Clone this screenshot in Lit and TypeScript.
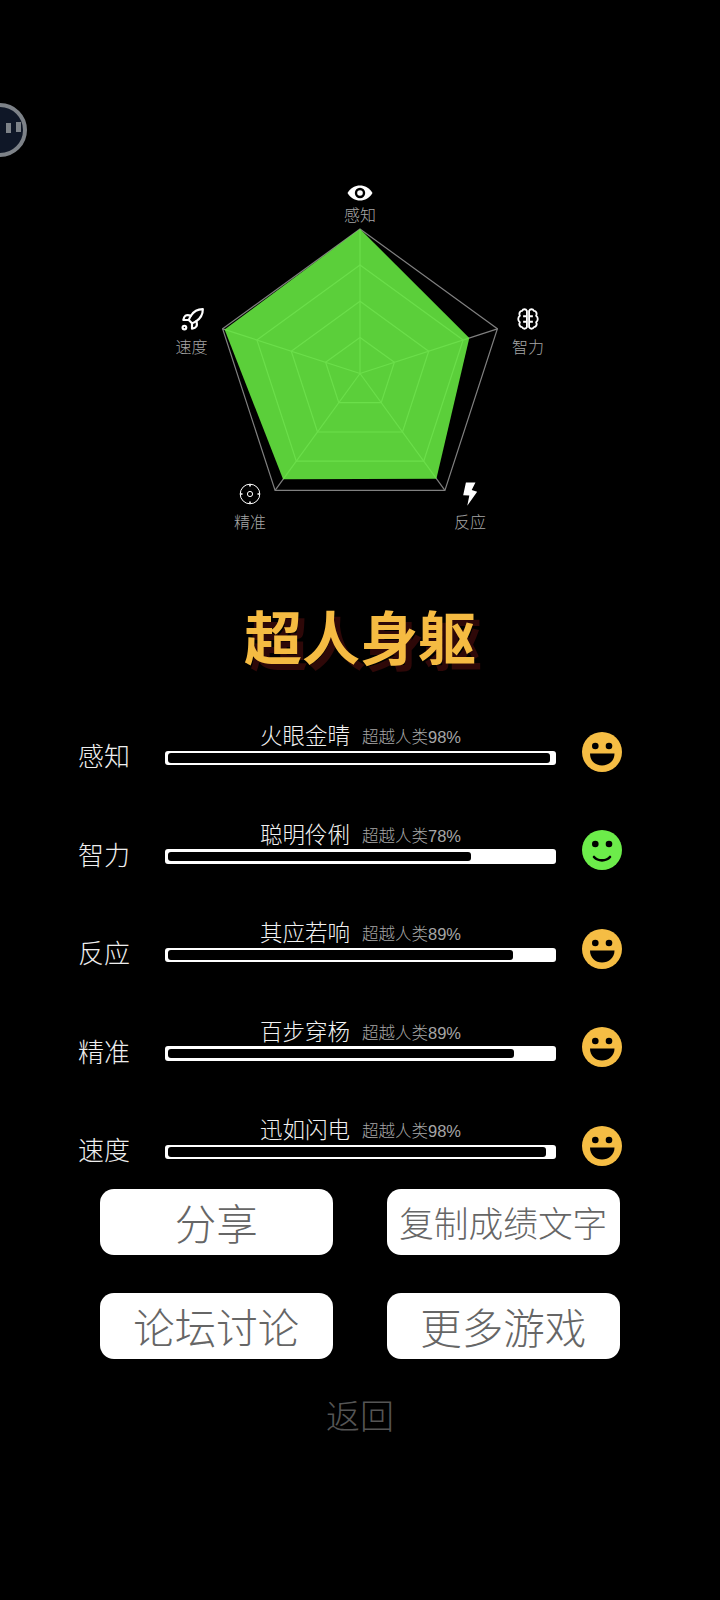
import { LitElement, html, svg, css } from 'lit'
import { customElement } from 'lit/decorators.js'

const CX = 360
const CY = 373.5
const R = 144.5

// clockwise from the top
const point = (i: number, v: number) => {
  const a = -Math.PI / 2 + (i * 2 * Math.PI) / 5
  return [CX + R * v * Math.cos(a), CY + R * v * Math.sin(a)]
}
const ring = (values: number[]) =>
  values.map((v, i) => point(i, v).map((n) => n.toFixed(1)).join(',')).join(' ')

const eye = svg`<svg width="26" height="18" viewBox="0 0 26 18"><path fill="#fff" d="M0.5 9C4 3.5 8 1.5 13 1.5S22 3.5 25.5 9C22 14.500 18 16.500 13 16.500S4 14.500 0.5 9Z"/><circle cx="13" cy="9" r="5.200" fill="#000"/><circle cx="13" cy="9" r="2.800" fill="#fff"/></svg>`

const rocket = svg`<svg width="26" height="26" viewBox="0 0 24 24" fill="none" stroke="#fff" stroke-width="2" stroke-linecap="round" stroke-linejoin="round"><circle cx="5" cy="19" r="1.700"/><path d="m12 15-3-3a22 22 0 0 1 2-3.950A12.880 12.880 0 0 1 22 2c0 2.720-.78 7.500-6 11a22.350 22.350 0 0 1-4 2z"/><path d="M9 12H4s.55-3.030 2-4c1.620-1.080 5 0 5 0"/><path d="M12 15v5s3.030-.55 4-2c1.080-1.620 0-5 0-5"/></svg>`

const lobe = 'M11 4.500C10 2.500 7.500 2.500 6.500 4.500C4.500 4.500 3.300 7 4.500 9C2.500 10.500 2.500 13.500 4.500 15C3.300 17 4.500 19.500 6.500 19.500C7.500 21.500 10 21.500 11 19.500ZM11 9.500H7.500M11 14.500H7.500'
const brain = svg`<svg width="26" height="26" viewBox="0 0 24 24" fill="none" stroke="#fff" stroke-width="1.700" stroke-linejoin="round"><path d=${lobe}/><path d=${lobe} transform="translate(24 0) scale(-1 1)"/></svg>`

const target = svg`<svg width="22" height="22" viewBox="0 0 22 22" fill="none" stroke="#fff" stroke-width="1"><circle cx="11" cy="11" r="9.800"/><circle cx="11" cy="11" r="2.600"/><path stroke-width="1.600" d="M11 1.200V3.500M11 18.500V20.800M1.200 11H3.500M18.500 11H20.800"/></svg>`

const bolt = svg`<svg width="15" height="25" viewBox="908 936 44 71"><path fill="#fff" d="M918 938H946L935 960L951 965L922 1006L928 976L910 975Z"/></svg>`

const grin = svg`<svg width="40" height="40" viewBox="0 0 40 40"><circle cx="20" cy="20" r="20" fill="#f5bd44"/><circle cx="13.300" cy="14" r="3.300" fill="#000"/><circle cx="27" cy="14" r="3.300" fill="#000"/><path fill="#000" d="M8 21.500H32.500C32.500 29 26.500 33.500 20 33.500S8 29 8 21.500Z"/></svg>`

const smile = svg`<svg width="40" height="40" viewBox="0 0 40 40"><circle cx="20" cy="20" r="20" fill="#6cec4a"/><circle cx="13.300" cy="14" r="3.300" fill="#000"/><circle cx="27" cy="14" r="3.300" fill="#000"/><path fill="none" stroke="#000" stroke-width="2.600" stroke-linecap="round" d="M12 27C16 31.500 24 31.500 28 27"/></svg>`

const axes = [
  { label: '感知', icon: eye, ix: 359.5, iy: 193, lx: 360, ly: 214 },
  { label: '智力', icon: brain, ix: 527.5, iy: 319, lx: 528, ly: 345.500 },
  { label: '反应', icon: bolt, ix: 470, iy: 494, lx: 470, ly: 521 },
  { label: '精准', icon: target, ix: 250, iy: 493.500, lx: 250, ly: 521 },
  { label: '速度', icon: rocket, ix: 191.500, iy: 320, lx: 191.500, ly: 345.500 },
]

const scores = [
  { label: '感知', name: '火眼金晴', pct: 98, fill: 99, face: grin },
  { label: '智力', name: '聪明伶俐', pct: 78, fill: 78.500, face: smile },
  { label: '反应', name: '其应若响', pct: 89, fill: 89.500, face: grin },
  { label: '精准', name: '百步穿杨', pct: 89, fill: 89.800, face: grin },
  { label: '速度', name: '迅如闪电', pct: 98, fill: 98.100, face: grin },
]

const shape = [1, 0.795, 0.9, 0.905, 0.985]

@customElement('app-root')
export class AppRoot extends LitElement {
  static styles = css`
    :host {
      display: block;
      position: relative;
      width: 720px;
      height: 1600px;
      overflow: hidden;
      background: #000;
      font-family: "Noto Sans CJK SC", "Liberation Sans", sans-serif;
      font-weight: 300;
    }

    .ball {
      position: absolute;
      left: -27px;
      top: 103px;
      width: 54px;
      height: 54px;
      box-sizing: border-box;
      border-radius: 50%;
      background: #0f1727;
      border: 4px solid #7d8288;
    }
    .ball i {
      position: absolute;
      width: 5px;
      height: 10px;
      background: #7d8288;
    }
    .ball i:nth-child(1) { left: 29px; top: 16px; }
    .ball i:nth-child(2) { left: 39px; top: 15px; }

    .radar {
      position: relative;
      height: 595px;
    }
    .radar svg.chart {
      position: absolute;
      inset: 0;
    }
    .node {
      position: absolute;
      display: flex;
      transform: translate(-50%, -50%);
    }
    .node.text {
      font-size: 16px;
      line-height: 20px;
      color: #a6a6a6;
      white-space: nowrap;
    }

    h1 {
      margin: 0;
      height: 80px;
      line-height: 80px;
      text-align: center;
      font-size: 58px;
      font-weight: 700;
      color: #f5bb42;
      text-shadow: 6px 6px 0 #2e0808;
    }

    .rows {
      display: flex;
      flex-direction: column;
      gap: 53.5px;
      margin-top: 45px;
      padding-left: 78px;
    }
    .row {
      display: flex;
      align-items: flex-start;
      height: 45px;
    }
    .row-label {
      width: 87px;
      margin-top: 17px;
      font-size: 26px;
      line-height: 36px;
      color: #eee;
    }
    .mid {
      width: 391px;
    }
    .head {
      display: flex;
      justify-content: center;
      align-items: center;
      gap: 12px;
      height: 30px;
      white-space: nowrap;
    }
    .name {
      position: relative;
      top: -1px;
      font-size: 22.500px;
      color: #f2f2f2;
    }
    .sub {
      position: relative;
      top: 1px;
      font-family: "Liberation Sans", "Noto Sans CJK SC", sans-serif;
      font-size: 16.500px;
      color: #a6a6a6;
    }
    .track {
      box-sizing: border-box;
      height: 14.500px;
      margin-top: 0.5px;
      padding: 2.500px;
      background: #fff;
      border-radius: 3px;
    }
    .fill {
      height: 100%;
      background: #000;
      border-radius: 3px;
    }
    .face {
      display: flex;
      margin: 11.500px 0 0 26px;
    }

    .buttons {
      display: grid;
      grid-template-columns: 232.500px 232.500px;
      gap: 38px 54.500px;
      margin-top: 30px;
      padding-left: 100px;
    }
    .btn {
      height: 66px;
      display: flex;
      align-items: center;
      justify-content: center;
      background: #fff;
      border-radius: 14px;
      font-size: 41.500px;
      color: #666;
      white-space: nowrap;
    }
    .btn.small {
      font-size: 34.700px;
    }
    .back {
      margin-top: 34px;
      height: 44px;
      line-height: 44px;
      text-align: center;
      font-size: 34px;
      color: #555;
    }
  `

  render() {
    const levels = [1, 0.75, 0.5, 0.25]
    return html`
      <div class="ball"><i></i><i></i></div>

      <div class="radar">
        <svg class="chart" width="720" height="595" viewBox="0 0 720 595">
          ${levels.map((l) => svg`<polygon points=${ring([l, l, l, l, l])} fill="none" stroke="#808080" stroke-width="1.200"/>`)}
          ${axes.map((_, i) => {
            const [x, y] = point(i, 1)
            return svg`<line x1=${CX} y1=${CY} x2=${x} y2=${y} stroke="#808080" stroke-width="1.200"/>`
          })}
          <polygon points=${ring(shape)} fill="#68ec42" fill-opacity="0.88"/>
        </svg>
        ${axes.map((a) => html`
          <div class="node" style="left:${a.ix}px;top:${a.iy}px">${a.icon}</div>
          <div class="node text" style="left:${a.lx}px;top:${a.ly}px">${a.label}</div>
        `)}
      </div>

      <h1>超人身躯</h1>

      <div class="rows">
        ${scores.map((s) => html`
          <div class="row">
            <div class="row-label">${s.label}</div>
            <div class="mid">
              <div class="head">
                <span class="name">${s.name}</span>
                <span class="sub">超越人类${s.pct}%</span>
              </div>
              <div class="track"><div class="fill" style="width:${s.fill}%"></div></div>
            </div>
            <div class="face">${s.face}</div>
          </div>
        `)}
      </div>

      <div class="buttons">
        <div class="btn">分享</div>
        <div class="btn small">复制成绩文字</div>
        <div class="btn">论坛讨论</div>
        <div class="btn">更多游戏</div>
      </div>

      <div class="back">返回</div>
    `
  }
}

declare global {
  interface HTMLElementTagNameMap {
    'app-root': AppRoot
  }
}
